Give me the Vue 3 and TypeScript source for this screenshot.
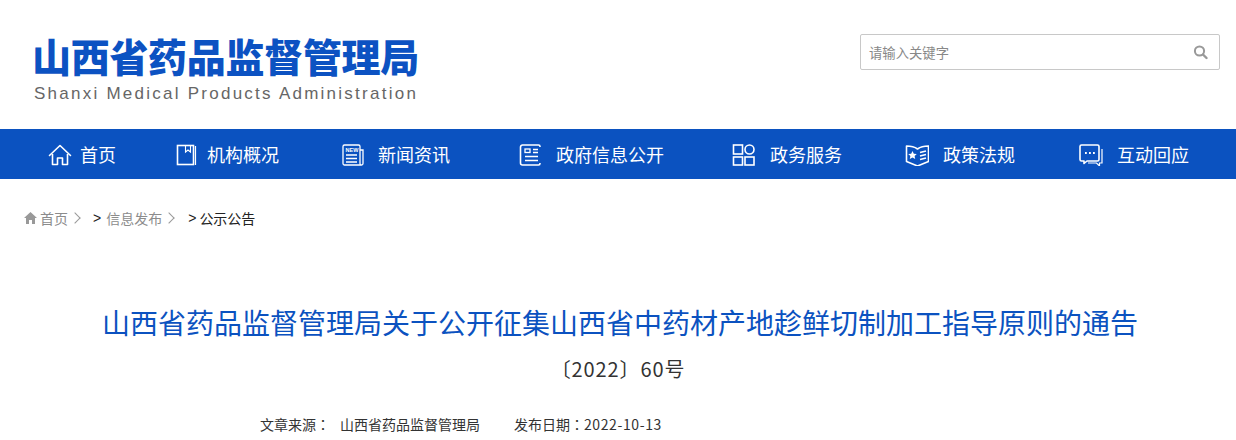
<script setup lang="ts">
interface NavItem { label: string; width: number; icon: string; gap: number }
const nav: NavItem[] = [
  { label: '首页', width: 127, gap: 8, icon: 'home' },
  { label: '机构概况', width: 166, gap: 8, icon: 'book' },
  { label: '新闻资讯', width: 177, gap: 13, icon: 'news' },
  { label: '政府信息公开', width: 214, gap: 14, icon: 'info' },
  { label: '政务服务', width: 173, gap: 14, icon: 'grid' },
  { label: '政策法规', width: 174, gap: 14, icon: 'policy' },
  { label: '互动回应', width: 110, gap: 14, icon: 'chat' }
]
</script>

<template>
  <div class="page">
    <header class="head">
      <div class="logo">
        <div class="logo-cn">山西省药品监督管理局</div>
        <div class="logo-en">Shanxi Medical Products Administration</div>
      </div>
      <div class="search">
        <span class="placeholder">请输入关键字</span>
        <svg width="16" height="16" viewBox="0 0 16 16" fill="none">
          <circle cx="7.5" cy="7" r="4.6" stroke="#999" stroke-width="2" />
          <path d="M11 10.5 14.500 14" stroke="#999" stroke-width="2.4" stroke-linecap="round" />
        </svg>
      </div>
    </header>

    <nav class="nav">
      <div v-for="item in nav" :key="item.label" class="nav-item" :style="{ width: item.width + 'px', gap: item.gap + 'px' }">
        <svg class="nav-icon" width="24" height="24" viewBox="0 -1 24 24" fill="none" stroke="#fff" stroke-width="1.6">
          <template v-if="item.icon === 'home'">
            <path d="M1.500 12.500 12 2.500l10.500 10" stroke-linejoin="round" stroke-linecap="round" />
            <path d="M4.500 11v10.500h5v-6.500h5v6.500h5V11" stroke-linejoin="round" />
          </template>
          <template v-else-if="item.icon === 'book'">
            <rect x="2.500" y="2.500" width="16" height="19" />
            <path d="M10.500 3v6l2.500-2 2.500 2V3" stroke-width="1.100" />
            <path d="M20.500 3v19" stroke-width="1.200" />
          </template>
          <template v-else-if="item.icon === 'news'">
            <path d="M20 22H3.500A1.500 1.500 0 0 1 2 20.500V3.500A1.500 1.500 0 0 1 3.500 2H17.500A1.500 1.500 0 0 1 19 3.500V20.500a1.500 1.500 0 0 0 1.500 1.500 1.500 1.500 0 0 0 1.500-1.500V7h-3" stroke-width="1.300" />
            <path d="M5 12h11M5 15.500h11M5 19h11" stroke-width="1.400" />
            <text x="4.500" y="9" class="new-text">NEW</text>
          </template>
          <template v-else-if="item.icon === 'info'">
            <path d="M22 4V3.500A1.500 1.500 0 0 0 20.500 2H4.500A2 2 0 0 0 2.500 4v16a2 2 0 0 0 2 2H20.500A1.500 1.500 0 0 0 22 20.500V20" />
            <rect x="7" y="6" width="5" height="3.500" stroke-width="1.300" />
            <path d="M15 6.500h5M15 9.500h5M7 13.500h13M7 17.500h13" stroke-width="1.400" />
          </template>
          <template v-else-if="item.icon === 'grid'">
            <rect x="1.500" y="2" width="9" height="9" />
            <circle cx="17.500" cy="6.500" r="4.500" />
            <rect x="1.500" y="14" width="9" height="8" />
            <rect x="13" y="14" width="9" height="8" />
          </template>
          <template v-else-if="item.icon === 'policy'">
            <path d="M1.500 3c4 0 8 .8 11 3 3-2.200 7-3 11-3v15.500l-11 4.500-11-4.500z" stroke-linejoin="round" />
            <path d="M7.500 8l1.300 2.800 3 .3-2.200 2 .6 3-2.700-1.500-2.700 1.500.6-3-2.200-2 3-.3z" fill="#fff" stroke="none" />
            <path d="M15 9.500l6-1.500M15 13l6-1.500M15 16.500l6-1.500" stroke-width="1.800" />
          </template>
          <template v-else>
            <path d="M2.500 2h16A1.500 1.500 0 0 1 20 3.500v13a1.500 1.500 0 0 1-1.500 1.500H8l-3 2.500V18H2.500A1.500 1.500 0 0 1 1 16.500v-13A1.500 1.500 0 0 1 2.500 2z" stroke-linejoin="round" />
            <path d="M23 6v14h-2.500v3l-3-3H9" stroke-width="1.200" />
            <path d="M6 10h1.800M10 10h1.800M14 10h1.800" stroke-width="1.800" />
          </template>
        </svg>
        <span class="nav-text">{{ item.label }}</span>
      </div>
    </nav>

    <div class="crumbs">
      <svg width="13" height="12" viewBox="0 0 13 12"><path d="M6.500 0 13 6h-2v6H8V8H5v4H2V6H0z" fill="#999" /></svg>
      <span class="crumb-link home-link">首页</span>
      <span class="chev"></span>
      <span class="sep first">&gt;</span>
      <span class="crumb-link">信息发布</span>
      <span class="chev"></span>
      <span class="sep">&gt;</span>
      <span class="crumb-now">公示公告</span>
    </div>

    <main class="article">
      <h1 class="title">山西省药品监督管理局关于公开征集山西省中药材产地趁鲜切制加工指导原则的通告</h1>
      <div class="doc-no">〔2022〕60号</div>
      <div class="meta">
        <span class="source">文章来源<span class="colon">：</span></span>
        <span class="origin">山西省药品监督管理局</span>
        <span class="date">发布日期<span class="colon">：</span><span class="digits">2022-10-13</span></span>
      </div>
    </main>
  </div>
</template>

<style scoped>
.page {
  width: 1236px;
  height: 440px;
  overflow: hidden;
  background: #fff;
  font-family: "Noto Sans CJK SC", "Noto Sans", sans-serif;
}
.head {
  height: 129px;
  box-sizing: border-box;
  padding: 33px 16px 0 32px;
  display: flex;
  justify-content: space-between;
  align-items: flex-start;
}
.logo-cn {
  font-size: 39px;
  line-height: 44px;
  font-weight: 900;
  letter-spacing: -0.3px;
  color: #0c52c2;
  white-space: nowrap;
}
.logo-en {
  margin-top: 6px;
  margin-left: 2px;
  font-family: "Liberation Sans", sans-serif;
  font-size: 17px;
  line-height: 21px;
  letter-spacing: 2.25px;
  color: #666;
  white-space: nowrap;
}
.search {
  margin-top: 1px;
  width: 360px;
  height: 36px;
  box-sizing: border-box;
  border: 1px solid #c8c8c8;
  border-radius: 2px;
  display: flex;
  align-items: center;
  justify-content: space-between;
  padding: 0 11px 0 8px;
}
.placeholder {
  font-size: 13.33px;
  color: #888;
}
.nav {
  height: 50px;
  background: #0b52c0;
  display: flex;
  align-items: center;
  padding-left: 48px;
}
.nav-item {
  display: flex;
  align-items: center;
  flex: none;
}
.nav-icon {
  flex: none;
}
.nav-text {
  color: #fff;
  font-size: 18px;
  line-height: 24px;
  white-space: nowrap;
}
.new-text {
  font-family: "Liberation Sans", sans-serif;
  font-size: 5.500px;
  font-weight: 700;
  fill: #fff;
  stroke: none;
}
.crumbs {
  height: 80px;
  box-sizing: border-box;
  padding: 0 0 2px 24px;
  display: flex;
  align-items: center;
  font-size: 14px;
  color: #8c8c8c;
}
.home-link {
  margin-left: 3px;
}
.crumb-link {
  color: #8c8c8c;
}
.chev {
  width: 7px;
  height: 7px;
  border-top: 1px solid #999;
  border-right: 1px solid #999;
  transform: rotate(45deg);
  margin-left: 3px;
}
.sep {
  color: #222;
  font-family: "Liberation Sans", sans-serif;
  font-size: 14px;
  margin: 0 3px 0 15px;
}
.sep.first {
  margin: 0 5px 0 14px;
}
.crumb-now {
  color: #222;
}
.article {
  padding-top: 43px;
  text-align: center;
}
.title {
  margin: 0;
  padding-left: 4px;
  font-size: 28px;
  line-height: 40px;
  font-weight: 400;
  color: #0b52c0;
  white-space: nowrap;
}
.doc-no {
  margin-top: 13px;
  font-size: 20px;
  line-height: 28px;
  letter-spacing: 0.9px;
  color: #333;
}
.meta {
  margin-top: 30px;
  display: flex;
  padding-left: 260px;
  font-size: 14px;
  line-height: 22px;
  color: #333;
  white-space: nowrap;
}
.colon {
  font-family: "Noto Sans CJK TC", sans-serif;
}
.origin {
  margin-left: 10px;
}
.date {
  margin-left: 34px;
}
.digits {
  letter-spacing: 0.6px;
}
</style>
